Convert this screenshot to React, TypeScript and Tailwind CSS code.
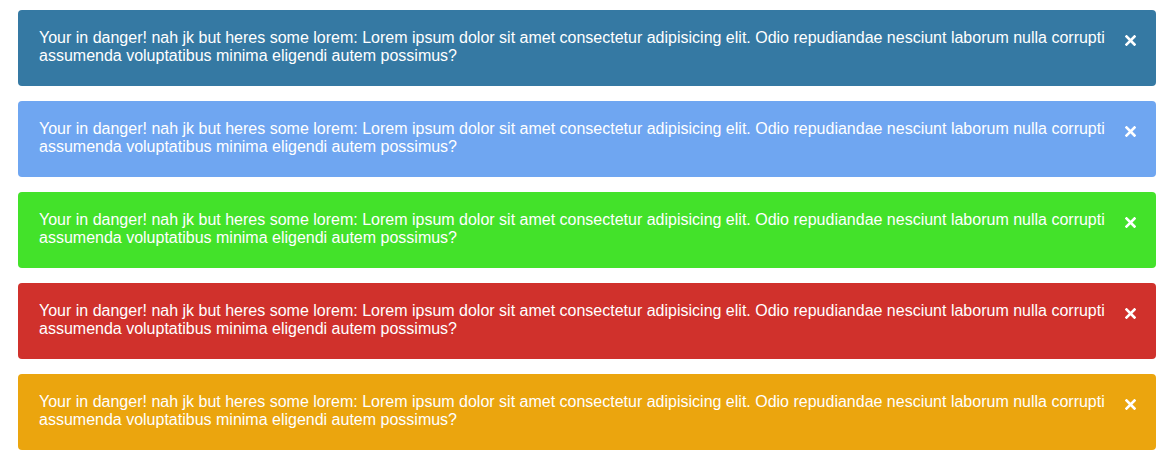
const MESSAGE =
  'Your in danger! nah jk but heres some lorem: Lorem ipsum dolor sit amet consectetur adipisicing elit. Odio repudiandae nesciunt laborum nulla corrupti assumenda voluptatibus minima eligendi autem possimus?';

const alerts = [
  { id: 'primary', bg: 'bg-[#3579a3]' },
  { id: 'info', bg: 'bg-[#6fa6f1]' },
  { id: 'success', bg: 'bg-[#43e22a]' },
  { id: 'danger', bg: 'bg-[#d0312c]' },
  { id: 'warning', bg: 'bg-[#eba50e]' },
];

function Alert({ bg }: { bg: string }) {
  return (
    <div className={`${bg} rounded-[4px] flex items-start text-white pl-[21px] pr-[20px] pt-[19px] pb-[21px]`}>
      <p className="flex-1 text-[16px] leading-[18px] pr-[14px]">{MESSAGE}</p>
      <button className="w-[12px] h-[18px] mt-[2px] flex items-center justify-center text-white">
        <svg width="11" height="11" viewBox="0 0 11 11">
          <path d="M1.5 1.5 L9.5 9.5 M9.5 1.5 L1.5 9.5" stroke="white" strokeWidth="2.6" strokeLinecap="square" />
        </svg>
      </button>
    </div>
  );
}

export default function App() {
  return (
    <div className="w-[1174px] h-[461px] bg-white pt-[10px] px-[18px] flex flex-col gap-[15px] font-['Liberation_Sans',Arial,sans-serif]">
      {alerts.map((a) => (
        <Alert key={a.id} bg={a.bg} />
      ))}
    </div>
  );
}
